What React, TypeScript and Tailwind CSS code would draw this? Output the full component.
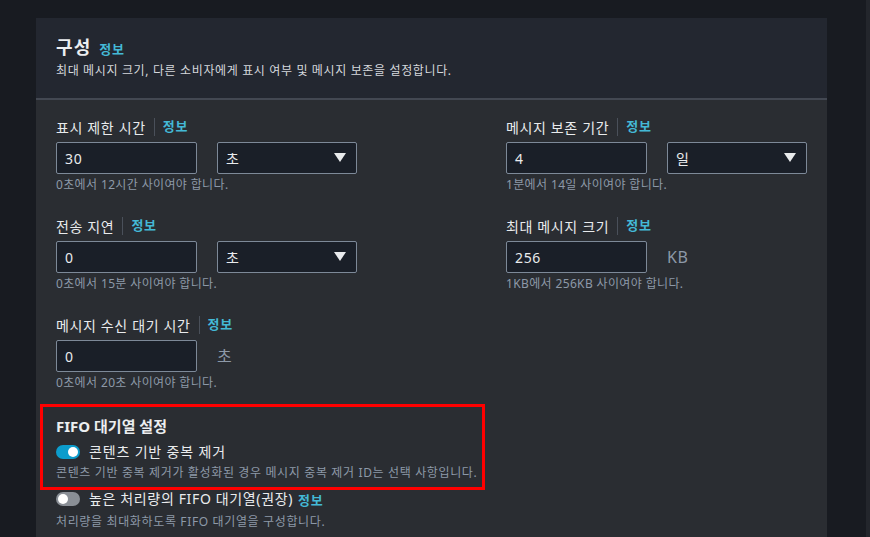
import React from "react";

const font = { fontFamily: '"Noto Sans", "Noto Sans CJK KR", sans-serif' };

function Info() {
  return <span className="text-[13px] font-bold tracking-[0.06em] text-[#44b9d6]">정보</span>;
}

function Label({ text }: { text: string }) {
  return (
    <div className="flex h-[20px] items-center text-[14px] text-[#e9ebed]">
      <span>{text}</span>
      <span className="mx-[8px] h-[18px] w-px bg-[#4a505a]"></span>
      <Info />
    </div>
  );
}

function Input({ value }: { value: string }) {
  return (
    <div className="flex h-[32px] w-[141px] items-center rounded-[2px] border border-[#7d8998] bg-[#1a1f28] px-[8px] text-[14px] text-[#e9ebed]">
      {value}
    </div>
  );
}

function Select({ value }: { value: string }) {
  return (
    <div className="flex h-[32px] w-[140px] items-center justify-between rounded-[2px] border border-[#7d8998] bg-[#1a1f28] pl-[8px] pr-[10px] text-[14px] text-[#e9ebed]">
      <span>{value}</span>
      <svg width="12" height="10" viewBox="0 0 12 10">
        <path d="M0 0 H12 L6 9 Z" fill="#e9ebed" />
      </svg>
    </div>
  );
}

function Hint({ text }: { text: string }) {
  return (
    <div className="mt-[3px] text-[12px] leading-[16px] tracking-[0.03em] text-[#8d99a8]">{text}</div>
  );
}

function Field({
  label,
  value,
  unit,
  select,
  hint,
}: {
  label: string;
  value: string;
  unit: string;
  select?: boolean;
  hint: string;
}) {
  return (
    <div className="flex flex-col">
      <Label text={label} />
      <div className="mt-[5px] flex items-center gap-[20px]">
        <Input value={value} />
        {select ? (
          <Select value={unit} />
        ) : (
          <span className="text-[16px] text-[#8d99a8]">{unit}</span>
        )}
      </div>
      <Hint text={hint} />
    </div>
  );
}

function Toggle({ on }: { on: boolean }) {
  return (
    <div
      className={
        on
          ? "flex h-[14px] w-[24px] shrink-0 items-center justify-end rounded-full bg-[#0c9ccc] px-[2px]"
          : "flex h-[14px] w-[24px] shrink-0 items-center justify-start rounded-full bg-[#8a8f96] px-[2px]"
      }
    >
      <div className="h-[10px] w-[10px] rounded-full bg-white"></div>
    </div>
  );
}

export default function App() {
  return (
    <div className="flex h-[537px] w-[870px] overflow-hidden bg-[#181b21] tracking-[0.04em]" style={font}>
      <div className="flex-1 pl-[36px] pt-[18px]">
        <div className="w-[791px] bg-[#2a2d32]">
          {/* Header */}
          <div className="border-b-2 border-[#434852] bg-[#232730] px-[20px] pb-[18px] pt-[16px]">
            <div className="flex items-baseline gap-[8px]">
              <h2 className="text-[18px] font-bold leading-[26px] tracking-[0.06em] text-[#eceef0]">구성</h2>
              <Info />
            </div>
            <p className="mt-[2px] text-[12px] leading-[18px] text-[#d5d8dc]">
              최대 메시지 크기, 다른 소비자에게 표시 여부 및 메시지 보존을 설정합니다.
            </p>
          </div>

          {/* Body */}
          <div className="px-[20px] pb-[40px] pt-[17px]">
            <div className="grid grid-cols-[450px_1fr] gap-y-[23px]">
              <Field label="표시 제한 시간" value="30" unit="초" select hint="0초에서 12시간 사이여야 합니다." />
              <Field label="메시지 보존 기간" value="4" unit="일" select hint="1분에서 14일 사이여야 합니다." />
              <Field label="전송 지연" value="0" unit="초" select hint="0초에서 15분 사이여야 합니다." />
              <Field label="최대 메시지 크기" value="256" unit="KB" hint="1KB에서 256KB 사이여야 합니다." />
              <Field label="메시지 수신 대기 시간" value="0" unit="초" hint="0초에서 20초 사이여야 합니다." />
            </div>

            <div className="-ml-[16px] mt-[13px] w-[445px] border-[3px] border-[#ff0000] pb-[5px] pl-[13px] pt-[7px]">
              <div className="text-[15px] font-bold leading-[24px] tracking-normal text-[#eceef0]">FIFO 대기열 설정</div>
              <div className="mt-[4px] flex items-center gap-[9px]">
                <Toggle on />
                <span className="text-[14px] leading-[20px] tracking-[0.06em] text-[#e9ebed]">콘텐츠 기반 중복 제거</span>
              </div>
              <div className="mt-[2px] whitespace-nowrap text-[12px] leading-[18px] text-[#8d99a8]">
                콘텐츠 기반 중복 제거가 활성화된 경우 메시지 중복 제거 ID는 선택 사항입니다.
              </div>
            </div>

            <div className="-mt-[3px] flex items-center gap-[9px]">
              <Toggle on={false} />
              <span className="text-[14px] leading-[20px] text-[#e9ebed]">높은 처리량의 FIFO 대기열(권장)</span>
              <span className="-ml-[4px]">
                <Info />
              </span>
            </div>
            <div className="mt-[2px] text-[12px] leading-[18px] text-[#8d99a8]">
              처리량을 최대화하도록 FIFO 대기열을 구성합니다.
            </div>
          </div>
        </div>
      </div>
      <div className="w-[4px] bg-[#23262c]"></div>
    </div>
  );
}
